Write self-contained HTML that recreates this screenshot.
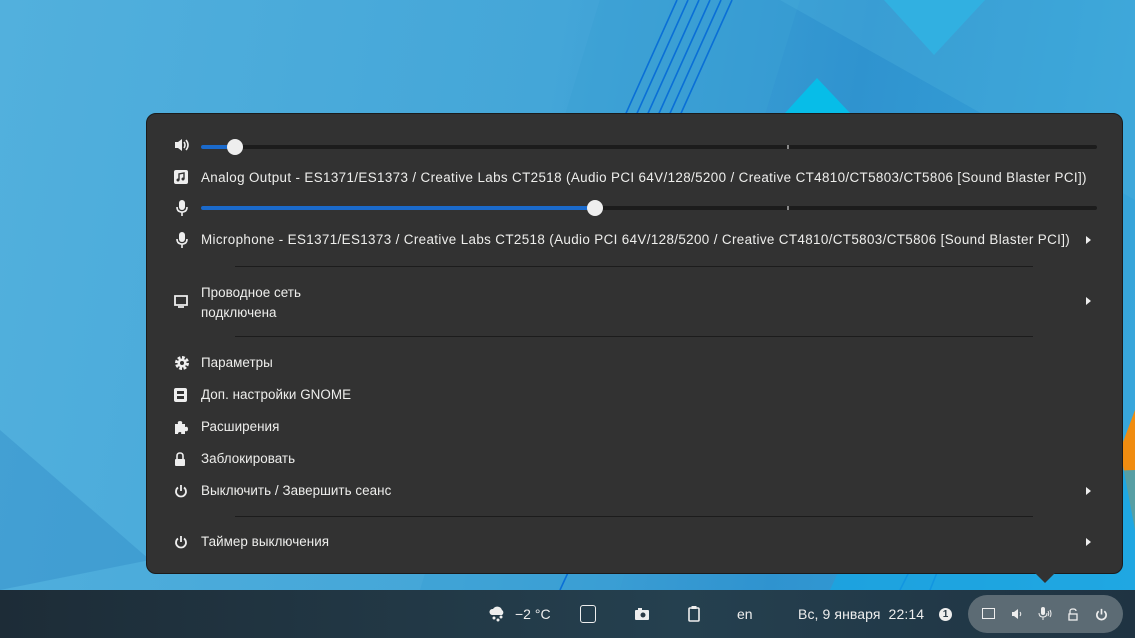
<!DOCTYPE html>
<html><head><meta charset="utf-8"><style>
*{margin:0;padding:0;box-sizing:border-box}
body{width:1135px;height:638px;overflow:hidden;position:relative;font-family:"Liberation Sans","DejaVu Sans",sans-serif;background:linear-gradient(100deg,#52b0dd 0%,#44a6d8 45%,#2f93cf 70%,#39a9dd 100%)}
.menu{position:absolute;left:146px;top:113px;width:977px;height:461px;background:#323232;border:1px solid #1b1b1b;border-radius:10px;color:#eeeeec;font-size:13.4px}
.arrow{position:absolute;left:1035px;top:573px;width:0;height:0;border-left:10px solid transparent;border-right:10px solid transparent;border-top:10px solid #323232}
.row{position:absolute;left:0;display:flex;align-items:center;white-space:nowrap}
.row svg{position:absolute;left:27px}
.row span{position:absolute;left:54px;letter-spacing:0.05px}
.row span.long{letter-spacing:0.37px}
.sep{position:absolute;left:88px;width:798px;height:1px;background:#1c1c1c}
.chev{position:absolute;left:939px;width:0;height:0;border-top:4px solid transparent;border-bottom:4px solid transparent;border-left:5px solid #eee}
.track{position:absolute;left:54px;width:896px;height:4px;background:#1c1c1c;border-radius:2px}
.fill{position:absolute;left:0;top:0;height:4px;background:#1b6acb;border-radius:2px}
.knob{position:absolute;width:16px;height:16px;border-radius:50%;background:#eee;top:-6px}
.panel{position:absolute;left:0;top:590px;width:1135px;height:48px;background:linear-gradient(90deg,#1d2c37,#25404f 60%,#1f3342);color:#eee;font-size:14px}
.panel .t{position:absolute;top:16px;white-space:nowrap}
.pill{position:absolute;left:968px;top:5px;width:155px;height:38px;border-radius:19px;background:#5c6b74}
</style></head><body>
<svg width="1135" height="590" style="position:absolute;left:0;top:0">
<polygon points="600,0 800,0 620,590 420,590" fill="#3a9fd4" opacity=".5"/>
<g stroke="#0a6fd6" stroke-width="1.6">
<line x1="677" y1="0" x2="560" y2="260"/><line x1="688" y1="0" x2="571" y2="260"/><line x1="699" y1="0" x2="582" y2="260"/><line x1="710" y1="0" x2="593" y2="260"/><line x1="721" y1="0" x2="604" y2="260"/><line x1="732" y1="0" x2="615" y2="260"/>
<line x1="1010" y1="390" x2="930" y2="590"/><line x1="1000" y1="390" x2="900" y2="590"/><line x1="560" y1="590" x2="620" y2="460"/>
</g>
<polygon points="884,0 985,0 934,55" fill="#23b0e4"/>
<polygon points="817,78 850,113 785,113" fill="#07bde8"/>
<polygon points="780,0 1135,0 1135,200" fill="#4eb3dd" opacity=".35"/>
<polygon points="1135,410 1120,450 1135,530" fill="#f08c10"/>
<polygon points="0,430 150,560 0,590" fill="#2a84c4" opacity=".35"/>
<polygon points="880,480 1135,470 1135,590 830,590" fill="#16a6e4" opacity=".7"/>
</svg>
<div class="menu">
 <div class="row" style="top:31px"><svg width="16" height="16" viewBox="0 0 16 16"><path d="M1 5h3l4-3v12l-4-3H1z" fill="#eee"/><path d="M10 5q2 3 0 6M12 3q4 5 0 10" stroke="#eee" stroke-width="1.6" fill="none"/></svg>
  <div class="track" style="top:0"><div class="fill" style="width:36px"></div><div class="knob" style="left:26px"></div><div style="position:absolute;left:586px;top:0;width:2px;height:4px;background:#888"></div></div></div>
 <div class="row" style="top:63px"><svg width="14" height="14" viewBox="0 0 14 14"><rect width="14" height="14" rx="2" fill="#eee"/><path d="M5 10V4l5-1v6" stroke="#323232" stroke-width="1.4" fill="none"/><circle cx="4" cy="10" r="1.5" fill="#323232"/><circle cx="9" cy="9" r="1.5" fill="#323232"/></svg><span class="long" style="top:-7px">Analog Output - ES1371/ES1373 / Creative Labs CT2518 (Audio PCI 64V/128/5200 / Creative CT4810/CT5803/CT5806 [Sound Blaster PCI])</span></div>
 <div class="row" style="top:94px"><svg width="16" height="18" viewBox="0 0 16 18" style="top:-9px"><rect x="5" y="1" width="6" height="10" rx="3" fill="#eee"/><path d="M3 8q0 5 5 5q5 0 5-5M8 13v4" stroke="#eee" stroke-width="1.6" fill="none"/></svg>
  <div class="track" style="top:-2px"><div class="fill" style="width:395px"></div><div class="knob" style="left:386px"></div><div style="position:absolute;left:586px;top:0;width:2px;height:4px;background:#888"></div></div></div>
 <div class="row" style="top:126px"><svg width="16" height="18" viewBox="0 0 16 18" style="top:-9px"><rect x="5" y="1" width="6" height="10" rx="3" fill="#eee"/><path d="M3 8q0 5 5 5q5 0 5-5M8 13v4" stroke="#eee" stroke-width="1.6" fill="none"/></svg><span class="long" style="top:-8px">Microphone - ES1371/ES1373 / Creative Labs CT2518 (Audio PCI 64V/128/5200 / Creative CT4810/CT5803/CT5806 [Sound Blaster PCI])</span><div class="chev" style="top:-4px"></div></div>
 <div class="sep" style="top:152px"></div>
 <div class="row" style="top:187px"><svg width="14" height="13" viewBox="0 0 14 13" style="top:-6px"><path d="M1 1h12v9H1zM4 12h6" stroke="#eee" stroke-width="1.8" fill="none"/></svg><span style="top:-18px;line-height:20px">Проводное сеть<br>подключена</span><div class="chev" style="top:-4px"></div></div>
 <div class="sep" style="top:222px"></div>
 <div class="row" style="top:249px"><svg width="16" height="16" viewBox="0 0 16 16" style="top:-8px"><circle cx="8" cy="8" r="5" stroke="#eee" stroke-width="4" stroke-dasharray="2.5 1.4" fill="none"/><circle cx="8" cy="8" r="4.5" fill="#eee"/><circle cx="8" cy="8" r="2" fill="#323232"/></svg><span style="top:-8px">Параметры</span></div>
 <div class="row" style="top:281px"><svg width="13" height="14" viewBox="0 0 13 14" style="top:-7px"><rect width="13" height="14" rx="2" fill="#eee"/><rect x="3" y="3" width="7" height="3" fill="#323232"/><rect x="3" y="8" width="7" height="3" fill="#323232"/></svg><span style="top:-8px">Доп. настройки GNOME</span></div>
 <div class="row" style="top:313px"><svg width="14" height="15" viewBox="0 0 14 15" style="top:-7px"><path d="M1 4h3q-1-3 2-3t2 3h3v3q3-1 3 2t-3 2v3H7q1-2-1-2t-2 2H1z" fill="#eee"/></svg><span style="top:-8px">Расширения</span></div>
 <div class="row" style="top:345px"><svg width="12" height="14" viewBox="0 0 12 14" style="top:-7px"><path d="M3 7V4q0-3 3-3t3 3v3" stroke="#eee" stroke-width="1.6" fill="none"/><rect x="1" y="7" width="10" height="7" rx="1" fill="#eee"/></svg><span style="top:-8px">Заблокировать</span></div>
 <div class="row" style="top:377px"><svg width="14" height="14" viewBox="0 0 14 14" style="top:-7px"><path d="M4 3.5a5 5 0 1 0 6 0M7 1v6" stroke="#eee" stroke-width="1.8" fill="none"/></svg><span style="top:-8px">Выключить / Завершить сеанс</span><div class="chev" style="top:-4px"></div></div>
 <div class="sep" style="top:402px"></div>
 <div class="row" style="top:428px"><svg width="14" height="14" viewBox="0 0 14 14" style="top:-7px"><path d="M4 3.5a5 5 0 1 0 6 0M7 1v6" stroke="#eee" stroke-width="1.8" fill="none"/></svg><span style="top:-8px">Таймер выключения</span><div class="chev" style="top:-4px"></div></div>
</div>
<div class="arrow"></div>
<div class="panel">
 <svg width="18" height="18" viewBox="0 0 18 18" style="position:absolute;left:489px;top:14px"><path d="M3 11a3 3 0 0 1 1-6a5 5 0 0 1 9 1a3 3 0 0 1 0 5z" fill="#eee"/><circle cx="5" cy="14" r="1.5" fill="#eee"/><circle cx="9" cy="16" r="1.5" fill="#eee"/><circle cx="12" cy="13" r="1.5" fill="#eee"/></svg>
 <div class="t" style="left:515px">−2 °C</div>
 <div style="position:absolute;left:580px;top:15px;width:16px;height:18px;border:1.6px solid #eee;border-radius:3px"></div>
 <svg width="14" height="12" viewBox="0 0 14 12" style="position:absolute;left:635px;top:18px"><rect y="2" width="14" height="10" rx="1" fill="#eee"/><rect x="3" width="4" height="3" fill="#eee"/><circle cx="8" cy="7" r="2.5" fill="#2a3a45"/></svg>
 <svg width="12" height="16" viewBox="0 0 12 16" style="position:absolute;left:688px;top:16px"><rect x="1" y="2" width="10" height="13" rx="1" stroke="#eee" stroke-width="1.6" fill="none"/><rect x="3.5" y="0" width="5" height="3" fill="#eee"/></svg>
 <div class="t" style="left:737px">en</div>
 <div class="t" style="left:798px;letter-spacing:0.1px">Вс, 9 января&nbsp; 22:14</div>
 <div style="position:absolute;left:939px;top:18px;width:13px;height:13px;border-radius:50%;background:#eee;color:#2a3a45;font-size:10px;text-align:center;line-height:13px;font-weight:bold">1</div>
 <div class="pill"></div>
 <div style="position:absolute;left:982px;top:18px;width:13px;height:11px;border:1.8px solid #eee"></div>
 <svg width="12" height="12" viewBox="0 0 12 12" style="position:absolute;left:1011px;top:18px"><path d="M1 4h2l4-3v10l-4-3H1z" fill="#eee"/><path d="M9 4q1.5 2 0 4" stroke="#eee" fill="none"/></svg>
 <svg width="14" height="14" viewBox="0 0 14 14" style="position:absolute;left:1038px;top:17px"><rect x="3" y="0" width="4" height="8" rx="2" fill="#eee"/><path d="M1 6q0 4 4 4t4-4M5 10v3M10 4q1.5 2.5 0 5M12 3q2 4 0 7" stroke="#eee" fill="none"/></svg>
 <svg width="10" height="13" viewBox="0 0 10 13" style="position:absolute;left:1068px;top:18px"><path d="M2 6V3q0-2 3-2t3 2" stroke="#eee" stroke-width="1.3" fill="none"/><rect x="1" y="6" width="8" height="6" stroke="#eee" stroke-width="1.3" fill="none"/></svg>
 <svg width="13" height="13" viewBox="0 0 14 14" style="position:absolute;left:1095px;top:18px"><path d="M4 3.5a5 5 0 1 0 6 0M7 1v6" stroke="#eee" stroke-width="1.8" fill="none"/></svg>
</div>
</body></html>
